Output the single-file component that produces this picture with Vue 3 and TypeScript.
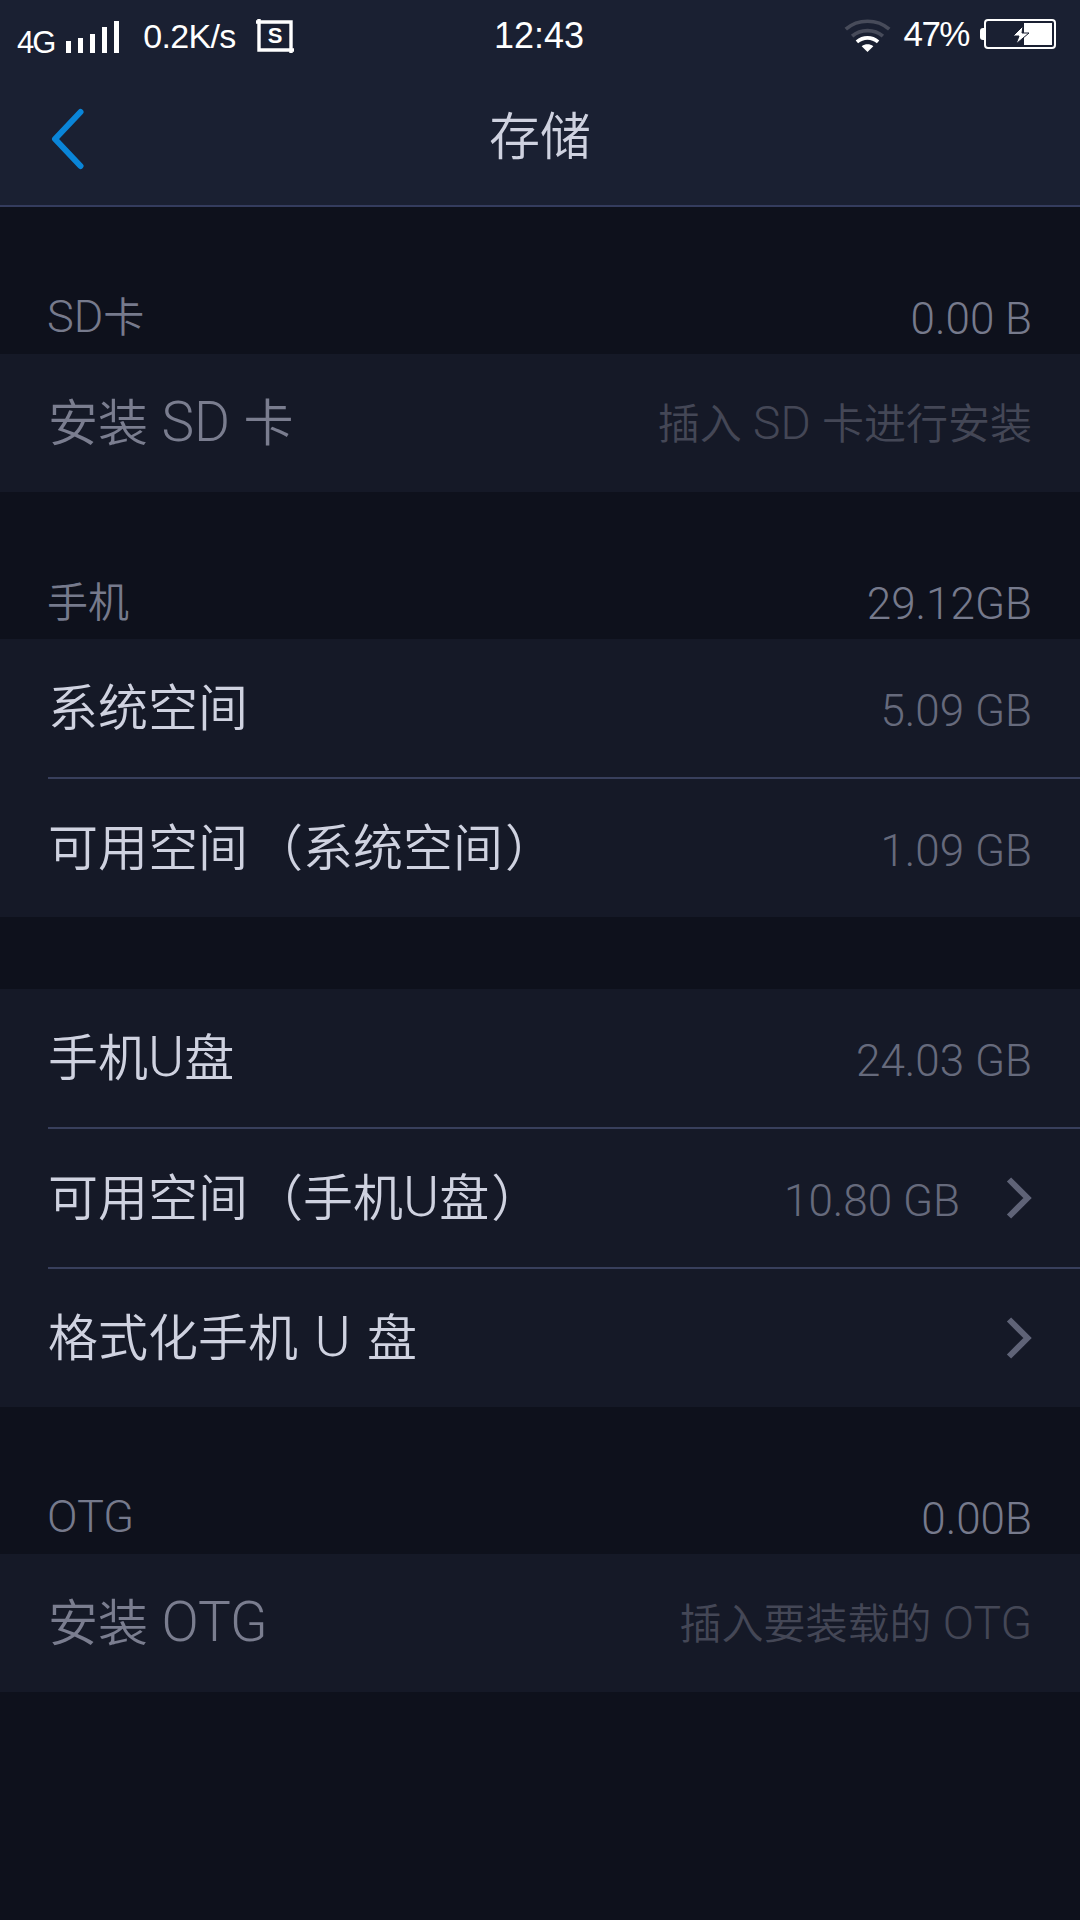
<template>
  <div class="screen">
    <header class="top">
      <div class="status">
        <div class="status-left">
          <span class="net">4G</span>
          <svg class="signal" width="53" height="32" viewBox="0 0 53 32">
            <rect v-for="bar in signalBars" :key="bar.x" :x="bar.x" :y="32 - bar.h" width="5" :height="bar.h" fill="#fff" />
          </svg>
          <span class="speed">0.2K/s</span>
          <svg class="shot" width="38" height="34" viewBox="0 0 38 34">
            <path d="M3 0v31h32v3M0 3h35v28h3" fill="none" stroke="#fff" stroke-width="3.4" />
            <text x="19" y="24" text-anchor="middle" class="shot-s">S</text>
          </svg>
        </div>
        <div class="clock">12:43</div>
        <div class="status-right">
          <svg class="wifi" width="47" height="35" viewBox="0 0 44 33">
            <path d="M1.5 11.5C13 1.5 31 1.5 42.5 11.5" fill="none" stroke="#474b5a" stroke-width="3.5" />
            <path d="M7.5 18C15.5 11 28.5 11 36.5 18" fill="none" stroke="#474b5a" stroke-width="3.5" />
            <path d="M12 23.5C18 18.5 26 18.5 32 23.5" fill="none" stroke="#fff" stroke-width="3.5" />
            <path d="M16.5 27.5C20 25 24 25 27.5 27.5L22 33Z" fill="#fff" />
          </svg>
          <span class="percent">47%</span>
          <div class="battery">
            <span class="battery-nub"></span>
            <div class="battery-body">
              <span class="battery-fill"></span>
              <svg class="bolt" width="16" height="18" viewBox="0 0 16 18">
                <path d="M10 0 0 10h6L3 18 16 7H9Z" fill="#fff" stroke="#1a2032" stroke-width="1" />
              </svg>
            </div>
          </div>
        </div>
      </div>
      <div class="toolbar">
        <svg class="back" width="34" height="64" viewBox="0 0 34 64">
          <path d="M29.5 5 4 32l25.5 27" fill="none" stroke="#0a85d8" stroke-width="6" stroke-linecap="round" stroke-linejoin="round" />
        </svg>
        <h1 class="title">存储</h1>
      </div>
    </header>

    <section v-for="group in groups" :key="group.id" class="group">
      <div v-if="group.heading" class="heading">
        <span class="heading-label">
          <span v-for="(seg, i) in splitText(group.heading)" :key="i" :class="seg.kind">{{ seg.text }}</span>
        </span>
        <span class="heading-value">{{ group.total }}</span>
      </div>
      <div v-else class="spacer"></div>
      <div class="card">
        <div v-for="row in group.rows" :key="row.label" class="row">
          <span :class="['row-label', { 'row-label--off': row.disabled }]">
            <span v-for="(seg, i) in splitText(row.label)" :key="i" :class="seg.kind">{{ seg.text }}</span>
          </span>
          <span v-if="row.disabled" class="row-value row-value--off">
            <span v-for="(seg, i) in splitText(row.value || '')" :key="i" :class="seg.kind">{{ seg.text }}</span>
          </span>
          <span v-else-if="row.value" class="row-value">{{ row.value }}</span>
          <svg v-if="row.link" class="chevron" width="26" height="42" viewBox="0 0 26 42">
            <path d="M3 2.5 21.5 21 3 39.5" fill="none" stroke="#5f6377" stroke-width="6" />
          </svg>
        </div>
      </div>
    </section>
  </div>
</template>

<script setup lang="ts">
interface Row {
  label: string
  value?: string
  disabled?: boolean
  link?: boolean
}

interface Group {
  id: string
  heading?: string
  total?: string
  rows: Row[]
}

const signalBars = [
  { x: 0, h: 12 },
  { x: 12, h: 15 },
  { x: 24, h: 19 },
  { x: 36, h: 26 },
  { x: 48, h: 32 },
]

// latin runs sit a little larger than the CJK around them, brackets get extra room
const splitText = (text: string) =>
  text
    .split(/( ?[A-Za-z]+ ?|（|）)/)
    .filter(Boolean)
    .map((part) => {
      let kind = 'cjk'
      if (part === '（') kind = 'open'
      else if (part === '）') kind = 'close'
      else if (/[A-Za-z]/.test(part)) kind = 'latin'
      return { text: part, kind }
    })

const groups: Group[] = [
  {
    id: 'sd',
    heading: 'SD卡',
    total: '0.00 B',
    rows: [{ label: '安装 SD 卡', value: '插入 SD 卡进行安装', disabled: true }],
  },
  {
    id: 'phone',
    heading: '手机',
    total: '29.12GB',
    rows: [
      { label: '系统空间', value: '5.09 GB' },
      { label: '可用空间（系统空间）', value: '1.09 GB' },
    ],
  },
  {
    id: 'udisk',
    rows: [
      { label: '手机U盘', value: '24.03 GB' },
      { label: '可用空间（手机U盘）', value: '10.80 GB', link: true },
      { label: '格式化手机 U 盘', link: true },
    ],
  },
  {
    id: 'otg',
    heading: 'OTG',
    total: '0.00B',
    rows: [{ label: '安装 OTG', value: '插入要装载的 OTG', disabled: true }],
  },
]
</script>

<style>
html,
body {
  margin: 0;
  background: #0e111c;
}
</style>

<style scoped>
.screen {
  width: 1080px;
  height: 1920px;
  overflow: hidden;
  background: #0e111c;
  font-family: Roboto, "Noto Sans CJK SC", sans-serif;
  font-weight: 350;
}
.top {
  height: 205px;
  background: #1a2032;
  border-bottom: 2px solid #343c5e;
}
.status {
  height: 68px;
  display: grid;
  grid-template-columns: 1fr auto 1fr;
  align-items: center;
  color: #fff;
  font-family: "Liberation Sans", sans-serif;
  font-weight: 400;
}
.status-left {
  display: flex;
  align-items: flex-end;
  padding: 16px 0 0 17px;
}
.net {
  font-size: 31px;
  letter-spacing: -2px;
  line-height: 36px;
  position: relative;
  top: 1px;
}
.signal {
  margin: 0 0 0 12px;
  position: relative;
  top: -7px;
}
.speed {
  margin-left: 24px;
  font-size: 34px;
  line-height: 36px;
  letter-spacing: -0.7px;
  position: relative;
  top: -6px;
}
.shot {
  margin-left: 20px;
  position: relative;
  top: -7px;
}
.shot-s {
  font-size: 22px;
  font-weight: 700;
  fill: #fff;
}
.clock {
  font-size: 36px;
  padding-top: 4px;
  margin-left: -2px;
}
.status-right {
  display: flex;
  align-items: center;
  justify-content: flex-end;
  padding-right: 24px;
}
.percent {
  margin-left: 12px;
  font-size: 35px;
  letter-spacing: -1.5px;
}
.battery {
  display: flex;
  align-items: center;
  margin-left: 11px;
}
.battery-nub {
  width: 4px;
  height: 12px;
  background: #fff;
  border-radius: 3px 0 0 3px;
}
.battery-body {
  position: relative;
  width: 68px;
  height: 26px;
  border: 2px solid #fff;
  border-radius: 4px;
}
.battery-fill {
  position: absolute;
  top: 2px;
  right: 2px;
  bottom: 2px;
  width: 28px;
  background: #fff;
}
.bolt {
  position: absolute;
  left: 27px;
  top: 5px;
}
.toolbar {
  height: 137px;
  box-sizing: border-box;
  padding-bottom: 7px;
  display: flex;
  align-items: center;
  justify-content: center;
  position: relative;
}
.back {
  position: absolute;
  left: 51px;
  top: 39px;
}
.title {
  margin: 0;
  font-size: 51px;
  font-weight: 350;
  color: #cfd2e0;
}
.group {
  display: flex;
  flex-direction: column;
}
.heading {
  height: 147px;
  box-sizing: border-box;
  padding: 0 48px 11px;
  display: flex;
  align-items: flex-end;
  justify-content: space-between;
  color: #767a8c;
  font-size: 44px;
  line-height: 48px;
}
.heading-label {
  font-size: 41px;
  white-space: pre;
  position: relative;
  top: -1px;
  left: -1px;
}
.spacer {
  height: 72px;
}
.card {
  background: #151927;
}
.row {
  height: 138px;
  box-sizing: border-box;
  margin-left: 48px;
  padding-right: 48px;
  display: flex;
  align-items: center;
  justify-content: space-between;
}
.row + .row {
  height: 140px;
  border-top: 2px solid #383f5c;
}
.row-label {
  font-size: 50px;
  color: #cfd2e0;
  white-space: pre;
  word-spacing: 3px;
  position: relative;
  top: -4px;
}
.row-label--off {
  color: #7a7d8f;
  word-spacing: 0;
}
.latin {
  font-size: 1.1em;
}
.open {
  margin-left: 5px;
}
.close {
  margin-left: 2px;
}
.row-value {
  margin-left: auto;
  font-size: 44px;
  color: #666a7c;
  white-space: pre;
  position: relative;
  top: 3px;
}
.row-value--off {
  font-size: 42px;
  color: #444756;
  top: -3px;
}
.chevron {
  margin-left: 46px;
  flex-shrink: 0;
}
</style>
